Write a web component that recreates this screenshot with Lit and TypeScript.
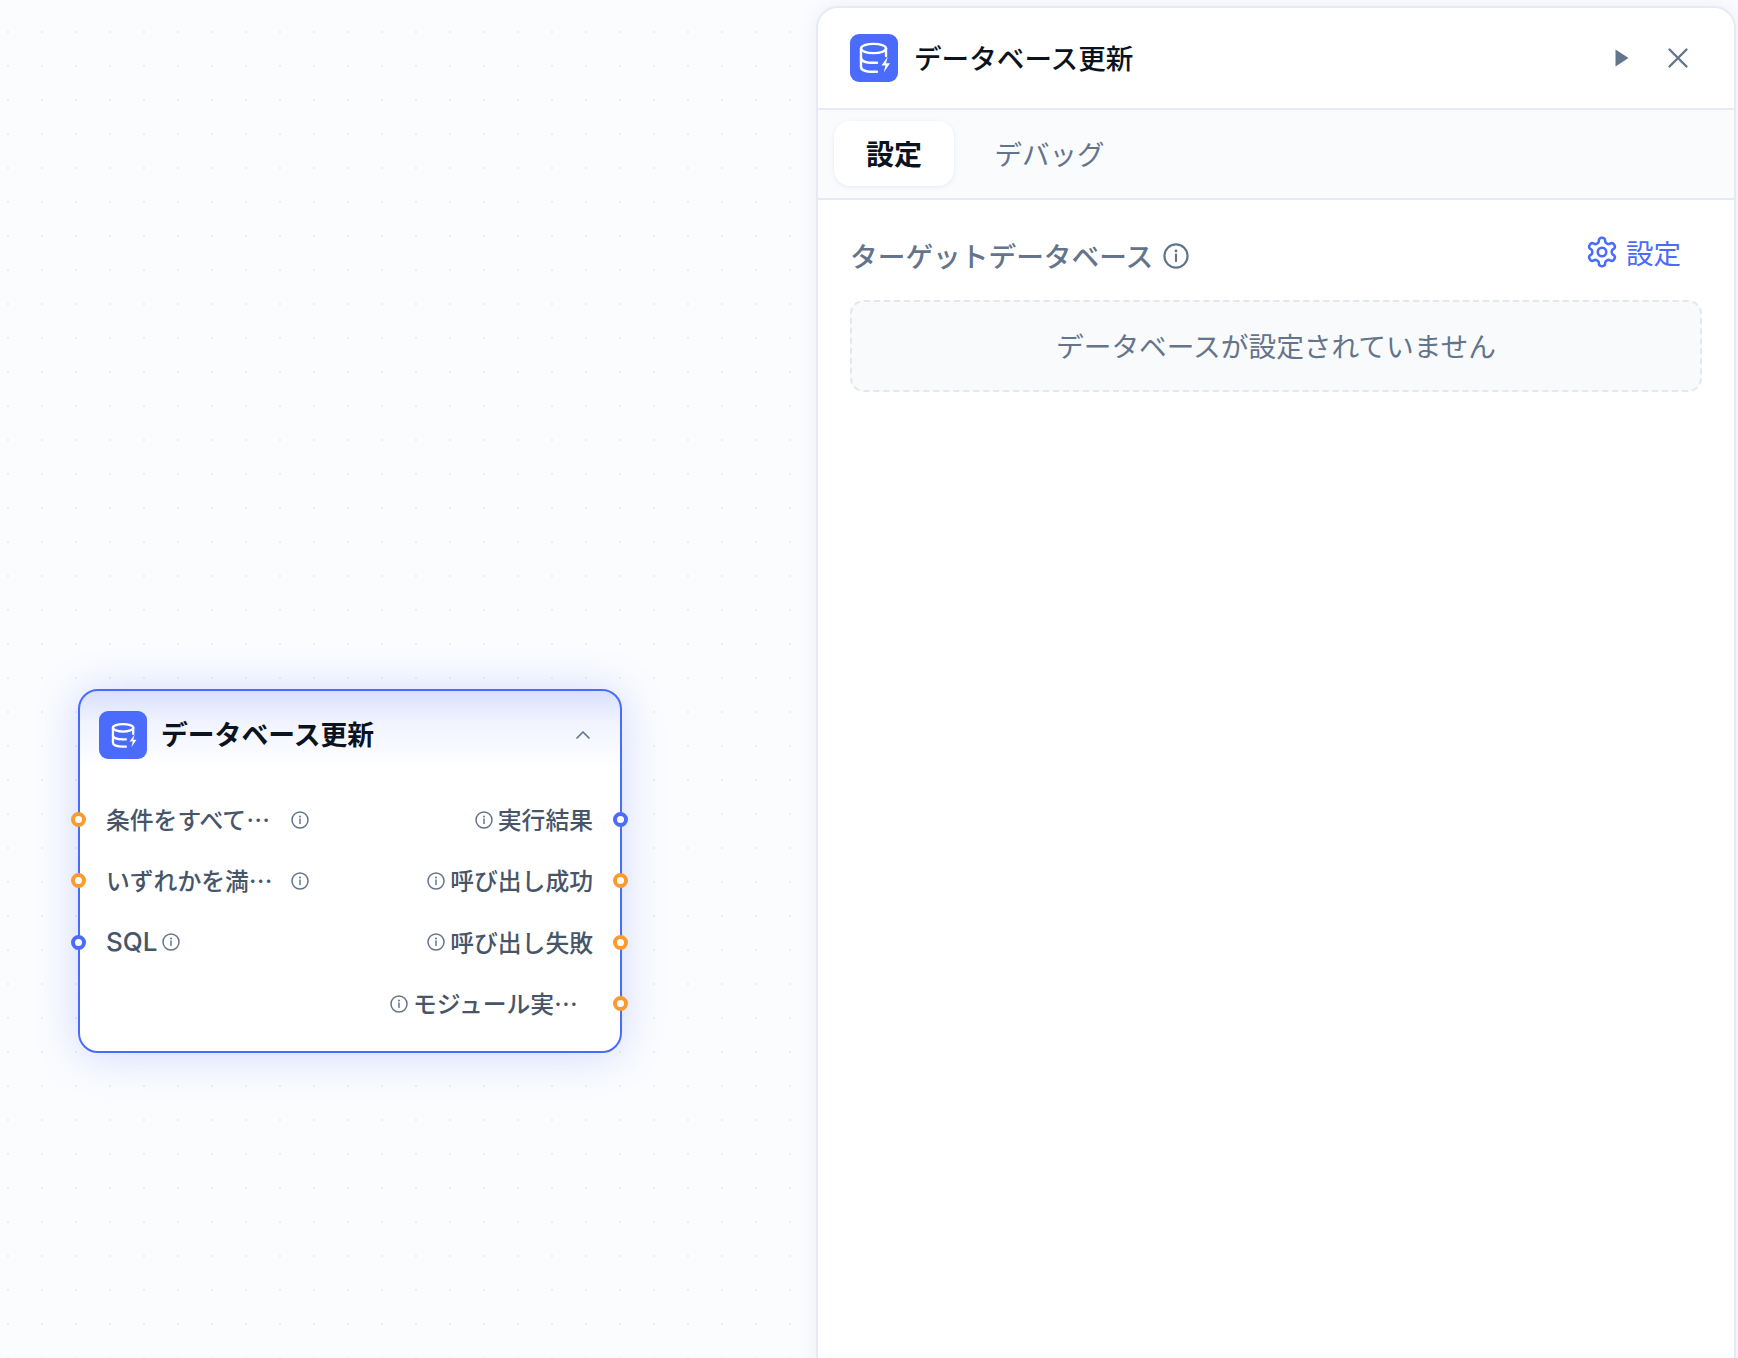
import { css, html, LitElement, svg } from "lit";
import { customElement } from "lit/decorators.js";

const dbIcon = svg`
  <ellipse cx="23.5" cy="14.5" rx="12.5" ry="4.6" />
  <path d="M11 14.500V33c0 3 5.500 4.800 12.500 4.800h3.500" />
  <path d="M36 14.500V22" />
  <path d="M11 24c0 3 5.500 4.800 12.500 4.800h3.500" />
  <path class="bolt" d="M37.500 23l-6 8.500h4l-1.800 7 6.300-9.300h-4l1.700-6.200z" />
`;

function infoIcon() {
  return html`<svg class="info" viewBox="0 0 18 18">
    <circle cx="9" cy="9" r="8" />
    <path d="M9 8v4.500" />
    <circle class="dot" cx="9" cy="5.500" r="1" />
  </svg>`;
}

const inputs = [
  { label: "条件をすべて…", color: "orange", wide: true },
  { label: "いずれかを満…", color: "orange", wide: true },
  { label: "SQL", color: "blue", wide: false },
];

const outputs = [
  { label: "実行結果", color: "blue", wide: false },
  { label: "呼び出し成功", color: "orange", wide: false },
  { label: "呼び出し失敗", color: "orange", wide: false },
  { label: "モジュール実…", color: "orange", wide: true },
];

@customElement("app-root")
export class AppRoot extends LitElement {
  static styles = css`
    :host {
      display: flex;
      justify-content: flex-end;
      align-items: flex-start;
      position: relative;
      height: 1358px;
      overflow: hidden;
      box-sizing: border-box;
      padding: 6px 2px 0 0;
      background-color: #fbfcfe;
      background-image: radial-gradient(circle, #eceef3 1px, transparent 1.4px);
      background-size: 34px 34px;
      background-position: -9px 15px;
      font-family: "Noto Sans CJK JP", Inter, sans-serif;
    }

    svg {
      display: block;
      flex: none;
      fill: none;
    }

    .db {
      flex: none;
      display: flex;
      align-items: center;
      justify-content: center;
      width: 48px;
      height: 48px;
      border-radius: 9px;
      background: #4a6bfb;
    }

    .db svg {
      width: 48px;
      height: 48px;
      stroke: #fff;
      stroke-width: 2.4;
      stroke-linecap: round;
    }

    .node .db svg {
      width: 39px;
      height: 39px;
      stroke-width: 2.8;
    }

    .db .bolt {
      fill: #fff;
      stroke: none;
    }

    .info {
      width: 18px;
      height: 18px;
      stroke: #64748b;
      stroke-width: 1.500;
      stroke-linecap: round;
    }

    .info .dot {
      fill: #64748b;
      stroke: none;
    }

    /* canvas node */
    .node {
      position: absolute;
      left: 78px;
      top: 689px;
      width: 544px;
      height: 364px;
      box-sizing: border-box;
      border: 2px solid #4a6bfb;
      border-radius: 20px;
      background: linear-gradient(180deg, #d9e0fe 0, #f1f4ff 32px, #fff 78px);
      box-shadow: 0 2px 44px rgba(74, 107, 251, 0.24);
    }

    .node-head {
      display: flex;
      align-items: center;
      height: 88px;
      padding: 0 28px 0 19px;
      box-sizing: border-box;
    }

    .node-title {
      flex: 1;
      margin-left: 14px;
      padding-bottom: 4px;
      font-size: 26.800px;
      font-weight: 700;
      color: #0b1220;
    }

    .chevron {
      width: 18px;
      height: 18px;
      stroke: #64748b;
      stroke-width: 1.700;
      stroke-linecap: round;
      stroke-linejoin: round;
    }

    .ports {
      display: flex;
      justify-content: space-between;
      padding: 10px 27px 0 26px;
    }

    .col {
      display: flex;
      flex-direction: column;
    }

    .col.out {
      align-items: flex-end;
    }

    .port {
      position: relative;
      display: flex;
      align-items: center;
      gap: 5px;
      height: 61.330px;
      font-size: 23.800px;
      font-weight: 500;
      color: #475569;
    }

    .port-label {
      padding-bottom: 2px;
      font-family: Inter, "Noto Sans CJK JP", sans-serif;
      white-space: nowrap;
    }

    .port-label.sql {
      font-size: 26px;
    }

    .port-label.wide {
      width: 180px;
      font-family: "Noto Sans CJK JP", sans-serif;
    }

    .handle {
      position: absolute;
      width: 15px;
      height: 15px;
      box-sizing: border-box;
      border-radius: 50%;
      border: 4px solid #fb9b2d;
      background: #fff;
    }

    .handle.blue {
      border-color: #4a6bfb;
    }

    .col.in .handle {
      left: -35px;
    }

    .col.out .handle {
      right: -35px;
    }

    /* side panel */
    .panel {
      position: relative;
      width: 920px;
      height: 1400px;
      flex: none;
      box-sizing: border-box;
      border: 2px solid #e5eaf4;
      border-radius: 22px;
      background: #fff;
      box-shadow: 0 0 18px rgba(148, 163, 200, 0.16);
    }

    .panel-head {
      display: flex;
      align-items: center;
      height: 100px;
      padding: 0 44px 0 32px;
      box-sizing: border-box;
    }

    .panel-title {
      flex: 1;
      margin-left: 16px;
      padding-bottom: 2px;
      font-size: 27.600px;
      font-weight: 500;
      color: #0b1220;
    }

    .head-actions {
      display: flex;
      align-items: center;
      gap: 32px;
    }

    .play {
      width: 24px;
      height: 24px;
      fill: #64748b;
    }

    .close {
      width: 24px;
      height: 24px;
      stroke: #64748b;
      stroke-width: 2.400;
      stroke-linecap: round;
    }

    .tabs {
      display: flex;
      gap: 9px;
      height: 92px;
      padding: 11px 16px 0;
      box-sizing: border-box;
      background: #f9fbfd;
      border-top: 2px solid #e5eaf4;
      border-bottom: 2px solid #e5eaf4;
    }

    .tab {
      display: flex;
      align-items: center;
      height: 63px;
      padding: 0 31.500px 2px;
      font-size: 27.500px;
      color: #64748b;
    }

    .tab.active {
      border-radius: 16px;
      background: #fff;
      box-shadow: 0 1px 4px rgba(148, 163, 184, 0.18);
      padding: 0 32px 2px;
      font-size: 28px;
      font-weight: 700;
      color: #0b1220;
    }

    .panel-body {
      padding: 36px 32px 0;
    }

    .section-head {
      display: flex;
      align-items: center;
      height: 40px;
    }

    .section-label {
      padding-bottom: 2px;
      font-size: 27.700px;
      font-weight: 500;
      color: #64748b;
    }

    .section-head .info {
      width: 26px;
      height: 26px;
      margin-left: 10px;
    }

    .config {
      display: flex;
      align-items: center;
      gap: 10px;
      margin: -9px 21px 0 auto;
      font-size: 27.500px;
      color: #4a6bfb;
    }

    .gear {
      width: 34px;
      height: 34px;
      margin: 0 -3px;
      stroke: #4a6bfb;
      stroke-width: 1.800;
      stroke-linejoin: round;
    }

    .empty {
      display: flex;
      align-items: center;
      justify-content: center;
      height: 92px;
      margin-top: 24px;
      padding-bottom: 2px;
      box-sizing: border-box;
      border: 2px dashed #e2e8f0;
      border-radius: 14px;
      background: #f8fafc;
      font-size: 27.700px;
      color: #64748b;
    }
  `;

  private _port(
    p: { label: string; color: string; wide: boolean },
    out: boolean
  ) {
    const dot = html`<span class="handle ${p.color}"></span>`;
    const cls = `port-label${p.wide ? " wide" : ""}${
      p.label === "SQL" ? " sql" : ""
    }`;
    return out
      ? html`<div class="port">
          ${infoIcon()}<span class=${cls}>${p.label}</span>${dot}
        </div>`
      : html`<div class="port">
          ${dot}<span class=${cls}>${p.label}</span>${infoIcon()}
        </div>`;
  }

  render() {
    const db = html`<div class="db">
      <svg viewBox="0 0 48 48">${dbIcon}</svg>
    </div>`;
    return html`
      <div class="node">
        <div class="node-head">
          ${db}
          <div class="node-title">データベース更新</div>
          <svg class="chevron" viewBox="0 0 18 18">
            <path d="M3 12l6-6 6 6" />
          </svg>
        </div>
        <div class="ports">
          <div class="col in">${inputs.map((p) => this._port(p, false))}</div>
          <div class="col out">${outputs.map((p) => this._port(p, true))}</div>
        </div>
      </div>

      <div class="panel">
        <div class="panel-head">
          ${db}
          <div class="panel-title">データベース更新</div>
          <div class="head-actions">
            <svg class="play" viewBox="0 0 24 24">
              <path d="M5.500 3.500L18.500 12 5.500 20.500z" />
            </svg>
            <svg class="close" viewBox="0 0 24 24">
              <path d="M3.500 3.500l17 17M20.500 3.500l-17 17" />
            </svg>
          </div>
        </div>
        <div class="tabs">
          <div class="tab active">設定</div>
          <div class="tab">デバッグ</div>
        </div>
        <div class="panel-body">
          <div class="section-head">
            <span class="section-label">ターゲットデータベース</span>
            ${infoIcon()}
            <div class="config">
              <svg class="gear" viewBox="0 0 24 24">
                <path
                  d="M12.220 2h-.44a2 2 0 0 0-2 2v.18a2 2 0 0 1-1 1.730l-.43.25a2 2 0 0 1-2 0l-.15-.08a2 2 0 0 0-2.730.73l-.22.38a2 2 0 0 0 .73 2.730l.15.1a2 2 0 0 1 1 1.720v.51a2 2 0 0 1-1 1.740l-.15.09a2 2 0 0 0-.73 2.730l.22.38a2 2 0 0 0 2.730.73l.15-.08a2 2 0 0 1 2 0l.43.25a2 2 0 0 1 1 1.730V20a2 2 0 0 0 2 2h.44a2 2 0 0 0 2-2v-.18a2 2 0 0 1 1-1.730l.43-.25a2 2 0 0 1 2 0l.15.08a2 2 0 0 0 2.730-.73l.22-.39a2 2 0 0 0-.73-2.730l-.15-.08a2 2 0 0 1-1-1.740v-.5a2 2 0 0 1 1-1.740l.15-.09a2 2 0 0 0 .73-2.730l-.22-.38a2 2 0 0 0-2.730-.73l-.15.08a2 2 0 0 1-2 0l-.43-.25a2 2 0 0 1-1-1.730V4a2 2 0 0 0-2-2z"
                />
                <circle cx="12" cy="12" r="3" />
              </svg>
              設定
            </div>
          </div>
          <div class="empty">データベースが設定されていません</div>
        </div>
      </div>
    `;
  }
}
